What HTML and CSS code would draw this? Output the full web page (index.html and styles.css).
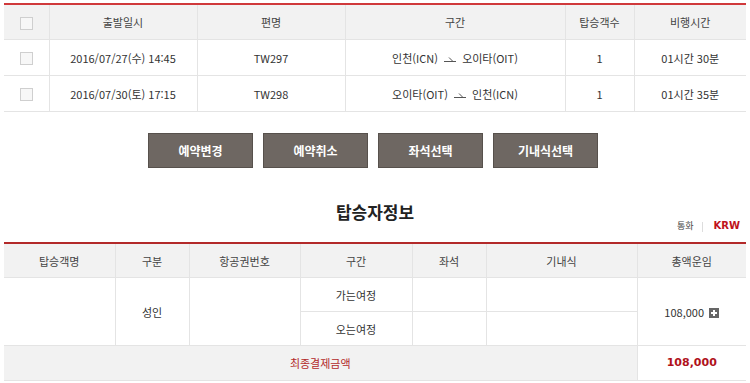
FILE: index.html
```html
<!DOCTYPE html>
<html lang="ko">
<head>
    <meta charset="UTF-8">
    <meta name="viewport" content="width=device-width, initial-scale=1.0">
    <title>예약 상세</title>
    <link rel="stylesheet" href="styles.css">
</head>
<body>
    <div class="wrap">
        <table class="grid flights">
            <colgroup>
                <col style="width:45px">
                <col style="width:148px">
                <col style="width:148px">
                <col style="width:220px">
                <col style="width:69px">
                <col>
            </colgroup>
            <thead>
                <tr>
                    <th><span class="check"></span></th>
                    <th>출발일시</th>
                    <th>편명</th>
                    <th>구간</th>
                    <th>탑승객수</th>
                    <th>비행시간</th>
                </tr>
            </thead>
            <tbody>
                <tr>
                    <td><span class="check"></span></td>
                    <td>2016/07/27(수) 14:45</td>
                    <td>TW297</td>
                    <td>인천(ICN) <svg class="arrow" width="14" height="8" viewBox="0 0 14 8"><path d="M1 7.5H13M6 3.5L10 7.5" stroke="#555" stroke-width="1" fill="none"/></svg> 오이타(OIT)</td>
                    <td>1</td>
                    <td>01시간 30분</td>
                </tr>
                <tr>
                    <td><span class="check"></span></td>
                    <td>2016/07/30(토) 17:15</td>
                    <td>TW298</td>
                    <td>오이타(OIT) <svg class="arrow" width="14" height="8" viewBox="0 0 14 8"><path d="M1 7.5H13M6 3.5L10 7.5" stroke="#555" stroke-width="1" fill="none"/></svg> 인천(ICN)</td>
                    <td>1</td>
                    <td>01시간 35분</td>
                </tr>
            </tbody>
        </table>

        <div class="actions">
            <button type="button" class="btn">예약변경</button>
            <button type="button" class="btn">예약취소</button>
            <button type="button" class="btn">좌석선택</button>
            <button type="button" class="btn">기내식선택</button>
        </div>

        <h2 class="section-title">탑승자정보</h2>
        <div class="currency">통화 <span class="bar"></span> <strong>KRW</strong></div>

        <table class="grid passengers">
            <colgroup>
                <col style="width:111px">
                <col style="width:74px">
                <col style="width:111px">
                <col style="width:112px">
                <col style="width:74px">
                <col style="width:151px">
                <col>
            </colgroup>
            <thead>
                <tr>
                    <th>탑승객명</th>
                    <th>구분</th>
                    <th>항공권번호</th>
                    <th>구간</th>
                    <th>좌석</th>
                    <th>기내식</th>
                    <th>총액운임</th>
                </tr>
            </thead>
            <tbody>
                <tr>
                    <td rowspan="2"></td>
                    <td rowspan="2">성인</td>
                    <td rowspan="2"></td>
                    <td>가는여정</td>
                    <td></td>
                    <td></td>
                    <td rowspan="2">108,000 <span class="plus"></span></td>
                </tr>
                <tr>
                    <td>오는여정</td>
                    <td></td>
                    <td></td>
                </tr>
                <tr class="total">
                    <td colspan="6" class="total-label">최종결제금액</td>
                    <td class="total-value">108,000</td>
                </tr>
            </tbody>
        </table>
    </div>
</body>
</html>
```

FILE: styles.css
```css
body {
    margin: 0;
    background: #fff;
    color: #333;
    font-family: "Noto Sans CJK KR", "Noto Sans", sans-serif;
    font-size: 11px;
}
.wrap {
    padding: 3px 4px 0;
}
.grid {
    width: 742px;
    border-collapse: collapse;
    table-layout: fixed;
}
.grid th, .grid td {
    border: 1px solid #e4e4e4;
    text-align: center;
    font-weight: normal;
    line-height: 14px;
    padding: 0;
}
.grid th {
    background: #f2f2f2;
    color: #444;
}
.grid tr > :first-child {
    border-left: 0;
}
.grid tr > :last-child {
    border-right: 0;
}
.flights {
    border-top: 2px solid #d0393b;
}
.flights th {
    height: 34px;
}
.flights td {
    height: 35px;
}
.check {
    display: inline-block;
    width: 11px;
    height: 11px;
    border: 1px solid #cfcfcf;
    background: #f7f7f7;
    vertical-align: middle;
}
.arrow {
    vertical-align: 1px;
    margin: 0 2px;
}
.actions {
    display: flex;
    justify-content: center;
    gap: 10px;
    margin-top: 21px;
    padding-right: 4px;
}
.btn {
    width: 105px;
    height: 35px;
    background: #6e6762;
    border: 1px solid #57514c;
    color: #fff;
    font-family: inherit;
    font-size: 12px;
    font-weight: bold;
    padding: 0;
}
.section-title {
    margin: 34px 0 0;
    text-align: center;
    font-size: 17px;
    line-height: 20px;
    color: #222;
}
.currency {
    text-align: right;
    font-size: 9px;
    line-height: 12px;
    margin-top: -2px;
    padding-right: 6px;
    color: #444;
}
.currency .bar {
    display: inline-block;
    width: 1px;
    height: 10px;
    background: #ddd;
    margin: 0 8px 0 6px;
    vertical-align: middle;
}
.currency strong {
    color: #c0121b;
    font-family: "DejaVu Sans", sans-serif;
    font-size: 10px;
}
.passengers {
    margin-top: 10px;
    border-top: 2px solid #b32a2a;
}
.passengers th {
    height: 33px;
}
.passengers td {
    height: 33px;
}
.plus {
    display: inline-block;
    position: relative;
    width: 10px;
    height: 10px;
    background: #666;
    vertical-align: -1px;
    margin-left: 2px;
}
.plus::before, .plus::after {
    content: "";
    position: absolute;
    background: #fff;
}
.plus::before {
    left: 2px;
    top: 4px;
    width: 6px;
    height: 2px;
}
.plus::after {
    left: 4px;
    top: 2px;
    width: 2px;
    height: 6px;
}
.total td {
    height: 34px;
}
.grid .total-label {
    background: #f2f2f2;
    color: #b32a2a;
}
.grid .total-value {
    color: #b0121b;
    font-family: "DejaVu Sans", sans-serif;
    font-weight: bold;
    font-size: 11px;
}
```
